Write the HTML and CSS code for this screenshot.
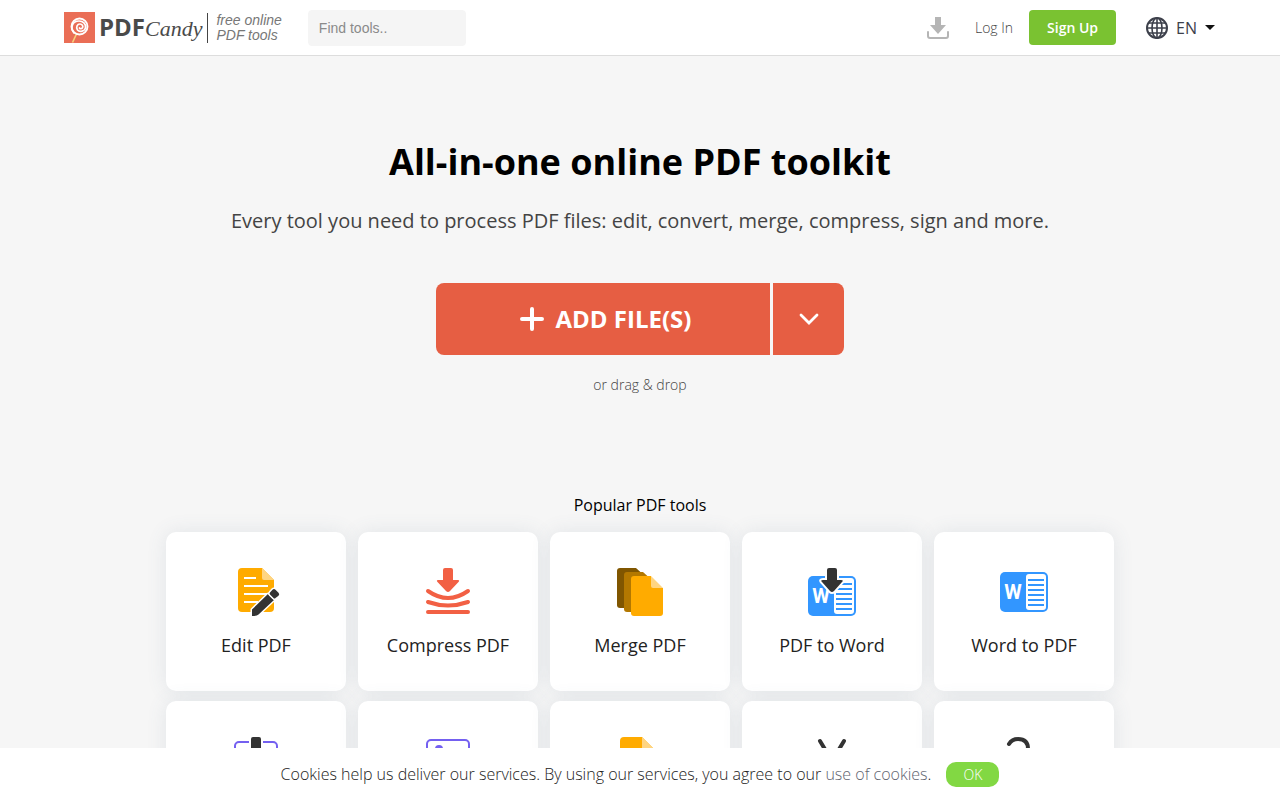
FILE: index.html
```html
<!DOCTYPE html>
<html lang="en">
<head>
  <meta charset="UTF-8" />
  <meta name="viewport" content="width=device-width, initial-scale=1.0" />
  <title>PDF Candy</title>
  <link rel="stylesheet" href="styles.css">
</head>
<body>
  <header class="header">
    <a class="logo" href="#">
      <svg width="31" height="31" viewBox="0 0 31 31" aria-hidden="true">
        <rect width="31" height="31" fill="#ea6e56"/>
        <path d="M12.5 22L8.500 30.500" stroke="#f8d27c" stroke-width="1.600"/>
        <circle cx="15.500" cy="14.500" r="8" fill="none" stroke="#fff" stroke-width="1.900"/>
        <path d="M10 21c-4-5-2-12 5-12 4 0 7 3 6.500 6.500-.5 4-6 5-8 2.500-2-3 0-6 2.500-6 2 0 3.500 2 2.500 3.800-.8 1.200-2.500 1.200-3 .2" fill="none" stroke="#fff" stroke-width="1.700" stroke-linecap="round"/>
      </svg>
      <span class="logo-name">PDF<i class="logo-candy">Candy</i></span>
    </a>
    <div class="tagline">free online<br>PDF tools</div>
    <input class="search" type="text" placeholder="Find tools.." aria-label="Find tools" autocomplete="off">

    <nav class="nav">
      <a class="downloads" href="#" aria-label="Downloads">
        <svg width="22" height="22" viewBox="0 0 22 22">
          <path d="M8 0h6v8h5l-8 9-8-9h5z" fill="#b5b5b5"/>
          <path d="M1 15v4q0 2 2 2h16q2 0 2-2v-4" fill="none" stroke="#b5b5b5" stroke-width="2" stroke-linecap="round"/>
        </svg>
      </a>
      <a class="login" href="#">Log In</a>
      <a class="signup" href="#">Sign Up</a>
      <button class="lang" type="button">
        <svg width="22" height="22" viewBox="0 0 22 22" fill="none" stroke="#3d404b" stroke-width="1.600" aria-hidden="true">
          <circle cx="11" cy="11" r="10" stroke-width="2"/>
          <ellipse cx="11" cy="11" rx="5" ry="10"/>
          <path d="M11 1v20M1 11h20M3 6h16M3 16h16"/>
        </svg>
        EN
        <span class="caret"></span>
      </button>
    </nav>
  </header>

  <main>
    <section class="hero">
      <h1>All-in-one online PDF toolkit</h1>
      <p class="subtitle">Every tool you need to process PDF files: edit, convert, merge, compress, sign and more.</p>
      <div class="upload">
        <button class="add" type="button">
          <svg width="24" height="24" viewBox="0 0 24 24" aria-hidden="true">
            <path d="M12 2v20M2 12h20" stroke="#fff" stroke-width="4" stroke-linecap="round"/>
          </svg>
          ADD FILE(S)
        </button>
        <button class="more" type="button" aria-label="More sources">
          <svg width="20" height="12" viewBox="0 0 20 12">
            <path d="M2 2l8 8 8-8" fill="none" stroke="#fff" stroke-width="2.800" stroke-linecap="round"/>
          </svg>
        </button>
      </div>
      <p class="drop">or drag &amp; drop</p>
    </section>

    <section class="tools">
      <h2>Popular PDF tools</h2>
      <div class="grid">
        <a class="card" href="#">
          <svg width="48" height="48" viewBox="0 0 48 48" aria-hidden="true">
            <path d="M10 0h20l12 12v28q0 4-4 4H10q-4 0-4-4V4q0-4 4-4z" fill="#ffab00"/>
            <path d="M30 0l12 12H32q-2 0-2-2z" fill="#ffd582"/>
            <path d="M12 10h12M12 18h24M12 26h24M12 34h14" stroke="#fff" stroke-width="2"/>
            <g fill="#333" stroke="#fff" stroke-width="3" stroke-linejoin="round" paint-order="stroke">
              <path d="M20 48v-6.500L36 26l6 6-15.500 14.500Q25 48 20 48z"/>
              <path d="M38 24.500l2.500-2.800q1.500-1.200 3 0l3 3q1.500 1.500 0 3L43.500 30q-1 1-2 0L38 26.500q-1-1 0-2z"/>
            </g>
          </svg>
          Edit PDF
        </a>
        <a class="card" href="#">
          <svg width="48" height="48" viewBox="0 0 48 48" aria-hidden="true">
            <path d="M21 0h6q2 0 2 2v10h5q2 0 .5 2L26 23q-2 2-4 0l-8.500-9q-1.500-2 .5-2h5V2q0-2 2-2z" fill="#f26044"/>
            <path d="M4 23q20 14 40 0M4 34q20 7 40 0M4 44h40" fill="none" stroke="#f26044" stroke-width="4" stroke-linecap="round"/>
          </svg>
          Compress PDF
        </a>
        <a class="card" href="#">
          <svg width="48" height="48" viewBox="0 0 48 48" aria-hidden="true">
            <path d="M4 0h16l11 10v30H4q-3 0-3-3V3q0-3 3-3z" fill="#805600"/>
            <path d="M11 4h16l11 10v30H11q-3 0-3-3V7q0-3 3-3z" fill="#b37800"/>
            <path d="M18 8h17l12 12v25q0 3-3 3H18q-3 0-3-3V11q0-3 3-3z" fill="#ffab00"/>
            <path d="M35 8l12 12H37q-2 0-2-2z" fill="#ffd582"/>
            <path d="M35 8l12 12V8z" fill="#fff"/>
          </svg>
          Merge PDF
        </a>
        <a class="card" href="#">
          <svg width="48" height="48" viewBox="0 0 48 48" aria-hidden="true">
            <rect y="8" width="48" height="40" rx="5" fill="#3296ff"/>
            <rect x="26" y="10" width="20" height="36" rx="3" fill="#fff"/>
            <path d="M28 16h16M28 21h16M28 26h16M28 31h16M28 36h16M28 41h16" stroke="#3296ff" stroke-width="2"/>
            <text class="w" x="13" y="35">W</text>
            <path d="M21 0h6q2 0 2 2v10h4q3 0 1 2l-8 9q-2 2-4 0l-8-9q-2-2 1-2h4V2q0-2 2-2z" fill="#333" stroke="#fff" stroke-width="4" paint-order="stroke"/>
          </svg>
          PDF to Word
        </a>
        <a class="card" href="#">
          <svg width="48" height="48" viewBox="0 0 48 48" aria-hidden="true">
            <rect y="4" width="48" height="40" rx="5" fill="#3296ff"/>
            <rect x="26" y="6" width="20" height="36" rx="3" fill="#fff"/>
            <path d="M28 12h16M28 17h16M28 22h16M28 27h16M28 32h16M28 37h16" stroke="#3296ff" stroke-width="2"/>
            <text class="w" x="13" y="31">W</text>
          </svg>
          Word to PDF
        </a>
        <a class="card" href="#">
          <svg width="48" height="48" viewBox="0 0 48 48" aria-hidden="true">
            <rect x="3" y="5" width="42" height="42" rx="4" fill="none" stroke="#7460f0" stroke-width="2"/>
            <path d="M6 42l11-13 9 9 7-6 9 10" fill="none" stroke="#7460f0" stroke-width="2"/>
            <path d="M21 0h6q2 0 2 2v10h4q3 0 1 2l-8 9q-2 2-4 0l-8-9q-2-2 1-2h4V2q0-2 2-2z" fill="#333" stroke="#fff" stroke-width="4" paint-order="stroke"/>
          </svg>
          PDF to JPG
        </a>
        <a class="card" href="#">
          <svg width="48" height="48" viewBox="0 0 48 48" aria-hidden="true">
            <rect x="3" y="3" width="42" height="42" rx="4" fill="none" stroke="#7460f0" stroke-width="2"/>
            <circle cx="15" cy="12" r="4" fill="#7460f0"/>
            <path d="M6 40l11-13 9 9 7-6 9 10" fill="none" stroke="#7460f0" stroke-width="2"/>
          </svg>
          JPG to PDF
        </a>
        <a class="card" href="#">
          <svg width="48" height="48" viewBox="0 0 48 48" aria-hidden="true">
            <path d="M8 0h18l14 14v30q0 4-4 4H8q-4 0-4-4V4q0-4 4-4z" fill="#ffab00"/>
            <path d="M26 0l14 14H28q-2 0-2-2z" fill="#ffd582"/>
          </svg>
          Extract Pages
        </a>
        <a class="card" href="#">
          <svg width="48" height="48" viewBox="0 0 48 48" fill="none" stroke="#333" stroke-width="4" stroke-linecap="round" aria-hidden="true">
            <path d="M12 4l18 30M36 4L18 34"/>
            <circle cx="14" cy="39" r="6"/>
            <circle cx="34" cy="39" r="6"/>
          </svg>
          Split PDF
        </a>
        <a class="card" href="#">
          <svg width="48" height="48" viewBox="0 0 48 48" aria-hidden="true">
            <path d="M9 7q3-5 9-5 10 0 10 10v10" fill="none" stroke="#333" stroke-width="4" stroke-linecap="round"/>
            <rect x="12" y="22" width="32" height="26" rx="4" fill="#ffab00"/>
          </svg>
          Unlock PDF
        </a>
      </div>
    </section>
  </main>

  <div class="cookies">
    <span>Cookies help us deliver our services. By using our services, you agree to our <a href="#">use of cookies</a>.</span>
    <button class="ok" type="button">OK</button>
  </div>
</body>
</html>
```
FILE: styles.css
```css
* { box-sizing: border-box; }
body { margin: 0; background: #f6f6f6; color: #222; font-family: "Open Sans", sans-serif; font-size: 16px; }
a { color: inherit; text-decoration: none; }
button { border: none; font-family: inherit; cursor: pointer; }
svg { display: block; flex: none; }

.header { display: flex; align-items: center; height: 56px; padding: 0 64px; background: #fff; border-bottom: 1px solid #ddd; }
.logo { display: flex; align-items: center; gap: 4px; color: #4a4a4a; }
.logo-name { font-size: 24px; font-weight: 700; line-height: 32px; white-space: nowrap; }
.logo-candy { font-family: "Liberation Serif", cursive; font-size: 22px; font-weight: 400; }
.tagline { margin-left: 5px; padding-left: 8px; border-left: 1px solid #444; color: #777; font-family: "Liberation Sans", Arial, sans-serif; font-size: 14px; font-style: italic; line-height: 15px; white-space: nowrap; }
.search { width: 158px; height: 36px; margin-left: 26px; padding: 0 10px; border: 1px solid #f5f5f5; border-radius: 4px; background: #f5f5f5; font-family: "Liberation Sans", Arial, sans-serif; font-size: 14px; }
.search::placeholder { color: #8a8a8a; }
.nav { display: flex; align-items: center; margin-left: auto; }
.login { margin: 0 16px 0 26px; color: #444; font-size: 14px; font-weight: 300; }
.signup { padding: 0 18px; border-radius: 4px; background: #7ac231; color: #fff; font-size: 14px; font-weight: 600; line-height: 35px; }
.lang { display: flex; align-items: center; gap: 8px; margin-left: 30px; padding: 0 1px 0 0; background: none; color: #3d404b; font-size: 16px; }
.caret { border: 5px solid transparent; border-top-color: #111; border-bottom: 0; }

.hero { padding: 80px 16px 0; text-align: center; }
h1 { margin: 0; color: #000; font-size: 36px; font-weight: 700; line-height: 52px; }
.subtitle { margin: 18px 0 0; color: #444; font-size: 20px; line-height: 30px; }
.upload { display: flex; justify-content: center; gap: 3px; margin-top: 47px; }
.upload button { display: flex; align-items: center; justify-content: center; height: 72px; background: #e65e43; color: #fff; }
.upload .add { gap: 12px; width: 334px; padding: 0 0 0 5px; border-radius: 8px 0 0 8px; font-size: 24px; font-weight: 700; line-height: 34px; }
.upload .more { width: 71px; padding: 0; border-radius: 0 8px 8px 0; }
.drop { margin: 20px 0 0; color: #444; font-size: 14px; font-weight: 300; line-height: 20px; }

.tools { max-width: 980px; margin: 0 auto; padding: 98px 16px 100px; }
h2 { margin: 0 0 15px; color: #000; font-size: 16px; font-weight: 400; line-height: 24px; text-align: center; }
.grid { display: grid; grid-template-columns: repeat(auto-fill, minmax(170px, 1fr)); gap: 10px 12px; }
.card { display: flex; flex-direction: column; align-items: center; gap: 16px; padding: 36px 0 32px; border-radius: 10px; background: #fff; box-shadow: 0 0 20px rgba(80, 110, 130, 0.12); font-size: 18px; line-height: 27px; }
.w { fill: #fff; font-family: Roboto, sans-serif; font-size: 20px; font-weight: 700; text-anchor: middle; }

.cookies { position: fixed; right: 0; bottom: 0; left: 0; display: flex; align-items: center; justify-content: center; gap: 15px; min-height: 52px; background: #fff; font-weight: 300; }
.cookies a { color: #5f6470; }
.ok { width: 53px; height: 25px; padding: 0; border-radius: 10px; background: #82d843; color: #fff; font-size: 14px; font-weight: 300; }
```
